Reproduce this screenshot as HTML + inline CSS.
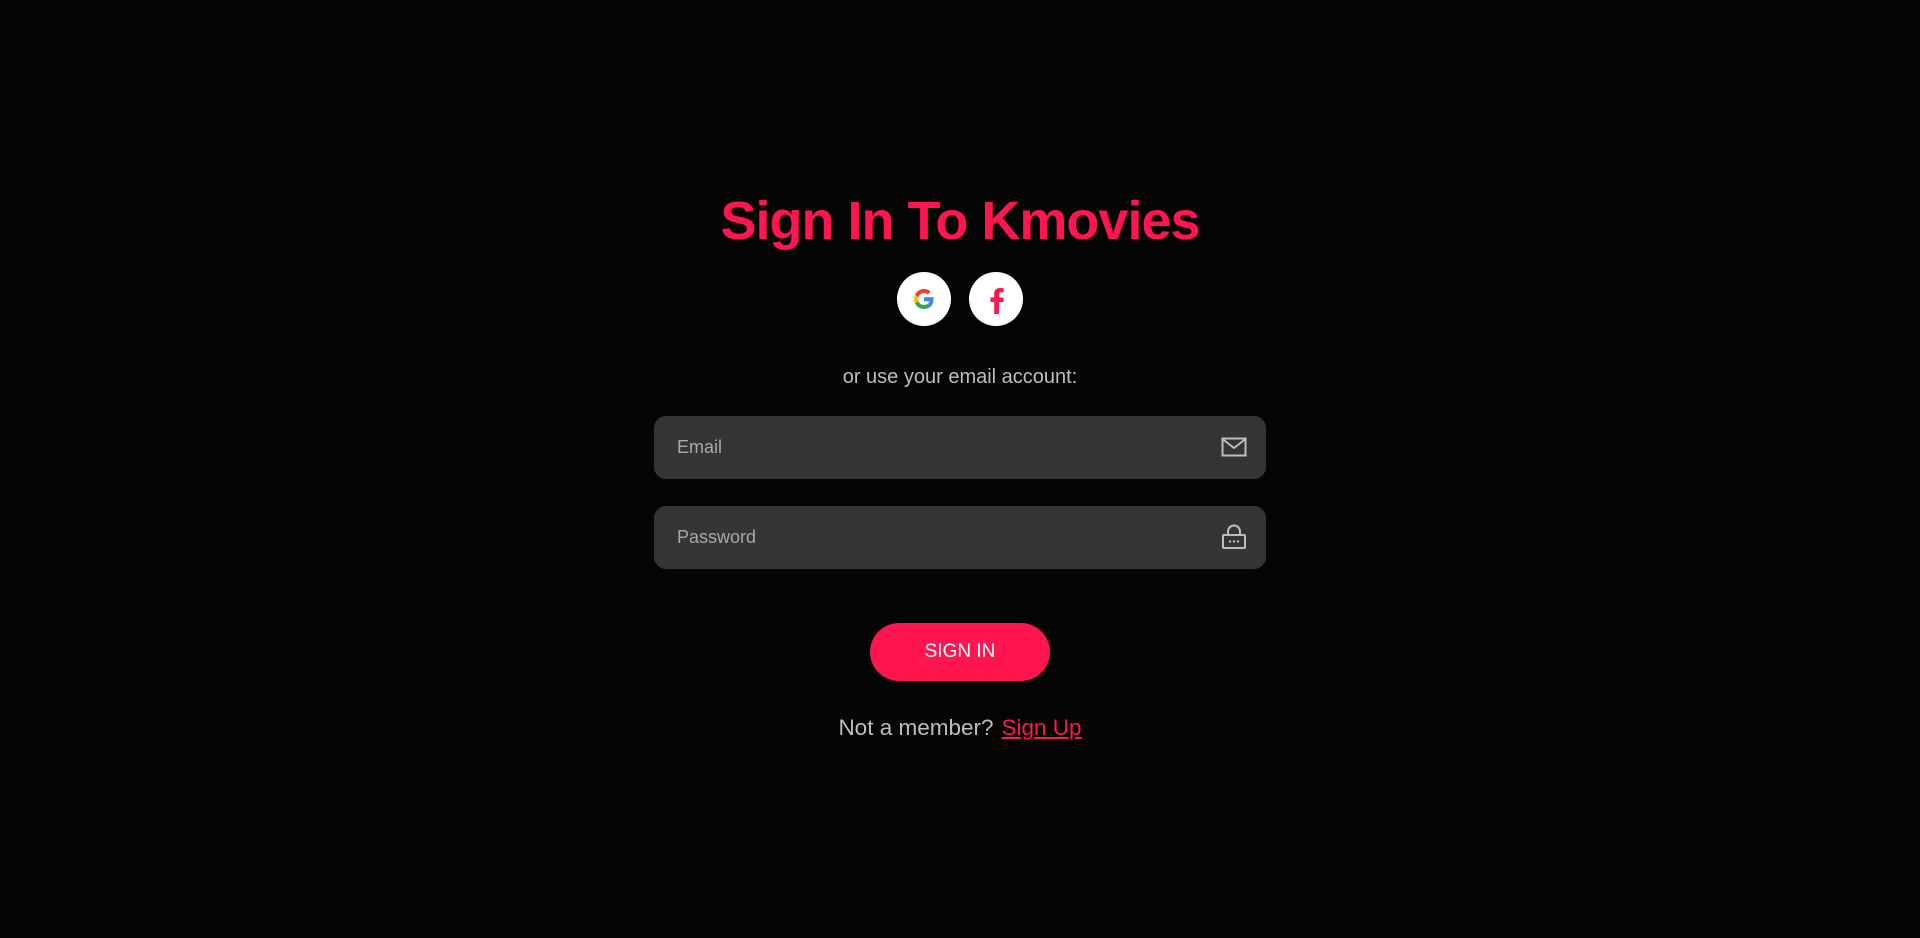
<!DOCTYPE html>
<html><head><meta charset="utf-8"><style>
html,body{margin:0;padding:0;background:#050505;width:1920px;height:938px;overflow:hidden;font-family:"Liberation Sans",sans-serif}
.t{position:absolute;left:0;width:1920px;text-align:center;top:186px;font-size:54px;font-weight:bold;color:#ff1650;letter-spacing:-1px;line-height:70px}
.c{position:absolute;top:272px;width:54px;height:54px;border-radius:50%;background:#fff}
.or{position:absolute;left:0;width:1920px;text-align:center;top:366px;font-size:20px;color:#bdbdbd}
.in{position:absolute;left:654px;width:612px;height:63px;border-radius:12px;background:#353537}
.in span{position:absolute;left:23px;top:21px;font-size:18px;color:#a8a8a8}
.in svg{position:absolute;right:19px}
.btn{position:absolute;left:870px;top:623px;width:180px;height:58px;border-radius:29px;background:#ff1650;color:#fff;font-size:19px;text-align:center;line-height:58px}
.nm{position:absolute;left:0;width:1920px;text-align:center;top:715px;font-size:22.5px;color:#bdbdbd}
.nm a{color:#ff1650;text-decoration:underline;margin-left:8px}
</style></head><body>
<div class="t">Sign In To Kmovies</div>
<div class="c" style="left:897px"><svg width="54" height="54" viewBox="0 0 54 54">
<path d="M36.5 27.3c0-.8-.1-1.5-.2-2.2H27v4.2h5.3c-.2 1.3-1 2.4-2 3.1v2.6h3.3c1.9-1.8 2.9-4.4 2.9-7.7z" fill="#4285F4"/>
<path d="M27 37c2.7 0 5-.9 6.6-2.4l-3.3-2.6c-.9.6-2 1-3.3 1-2.6 0-4.8-1.7-5.5-4.1h-3.4v2.6C19.7 34.8 23.1 37 27 37z" fill="#34A853"/>
<path d="M21.5 28.9c-.2-.6-.3-1.2-.3-1.9s.1-1.3.3-1.9v-2.6h-3.4c-.7 1.4-1.1 2.9-1.1 4.5s.4 3.1 1.1 4.5l3.4-2.6z" fill="#FBBC05"/>
<path d="M27 21c1.5 0 2.8.5 3.8 1.5l2.9-2.9C32 18 29.7 17 27 17c-3.9 0-7.3 2.2-8.9 5.5l3.4 2.6c.7-2.4 2.9-4.1 5.5-4.1z" fill="#EA4335"/>
</svg></div>
<div class="c" style="left:969px"><svg width="54" height="54" viewBox="0 0 54 54"><path d="M30 42V30h4.5v-4.5H30v-3c0-1.3.5-2.2 2.2-2.2h2.5v-4c-.5-.1-2-.3-3.7-.3-3.5 0-5.8 2.1-5.8 6V25.5h-3.8V30h3.8v12z" fill="#ff1650"/></svg></div>
<div class="or">or use your email account:</div>
<div class="in" style="top:416px"><span>Email</span><svg style="top:21px" width="26" height="20" viewBox="0 0 26 20"><rect x="1.5" y="1.5" width="23" height="17" fill="none" stroke="#bdbdbd" stroke-width="2"/><path d="M1.5 2l11.5 9 11.5-9" fill="none" stroke="#bdbdbd" stroke-width="2"/></svg></div>
<div class="in" style="top:506px"><span>Password</span><svg style="top:18px" width="26" height="26" viewBox="0 0 26 26"><path d="M7 11V7.5a6 6 0 0 1 12 0V11" fill="none" stroke="#bdbdbd" stroke-width="2"/><rect x="2" y="11" width="22" height="13" rx="1" fill="none" stroke="#bdbdbd" stroke-width="2"/><circle cx="9" cy="17.5" r="1.2" fill="#bdbdbd"/><circle cx="13" cy="17.5" r="1.2" fill="#bdbdbd"/><circle cx="17" cy="17.5" r="1.2" fill="#bdbdbd"/></svg></div>
<div class="btn">SIGN IN</div>
<div class="nm">Not a member?<a>Sign Up</a></div>
</body></html>
